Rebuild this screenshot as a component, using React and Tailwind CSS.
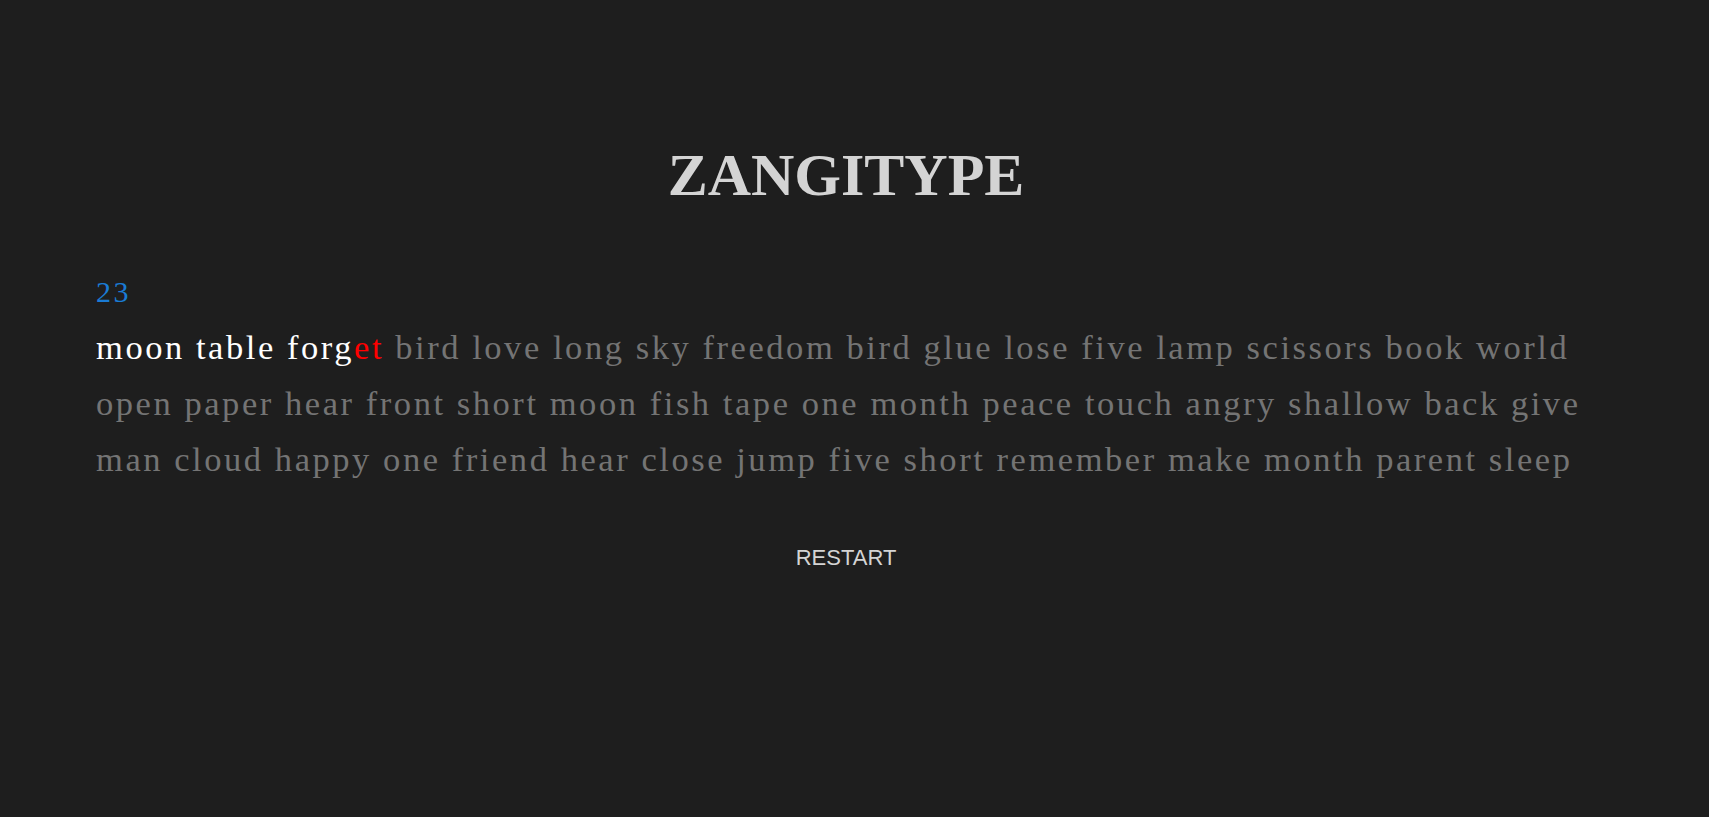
import React from "react";

const lines = [
  "moon table forget bird love long sky freedom bird glue lose five lamp scissors book world",
  "open paper hear front short moon fish tape one month peace touch angry shallow back give",
  "man cloud happy one friend hear close jump five short remember make month parent sleep",
];

const typed = ["moon", "table", "forg"];
const wrongTail = "et";

const Word = ({ word, wi }) => {
  if (wi < 2) return <span className="text-white">{word}</span>;
  if (wi === 2)
    return (
      <span>
        <span className="text-white">{typed[2]}</span>
        <span className="text-[#ff0000]">{wrongTail}</span>
      </span>
    );
  return <span className="text-[#747474]">{word}</span>;
};

export default function App() {
  let idx = 0;
  return (
    <div className="min-h-screen bg-[#1e1e1e] pr-[17px]">
      <div className="pt-[130px] flex flex-col items-center">
        <h1 className="text-[60px] font-bold text-[#d4d4d4] font-['Liberation_Serif',serif] leading-normal">
          ZANGITYPE
        </h1>
      </div>
      <div className="px-[96px] mt-[49px] font-['Liberation_Serif',serif]">
        <div className="text-[30px] text-[#1a7bd4] leading-normal tracking-[2.5px]">23</div>
        <div className="mt-[5px] text-[34.5px] leading-[56px] tracking-[2.55px]">
          {lines.map((line, li) => (
            <div key={li}>
              {line.split(" ").map((w, i) => {
                const wi = idx++;
                return (
                  <React.Fragment key={i}>
                    <Word word={w} wi={wi} />
                    {i < line.split(" ").length - 1 ? " " : ""}
                  </React.Fragment>
                );
              })}
            </div>
          ))}
        </div>
      </div>
      <div className="flex justify-center mt-[54px]">
        <button className="text-[22px] text-[#d4d4d4] font-['Liberation_Sans',Arial,sans-serif] leading-normal">
          RESTART
        </button>
      </div>
    </div>
  );
}
